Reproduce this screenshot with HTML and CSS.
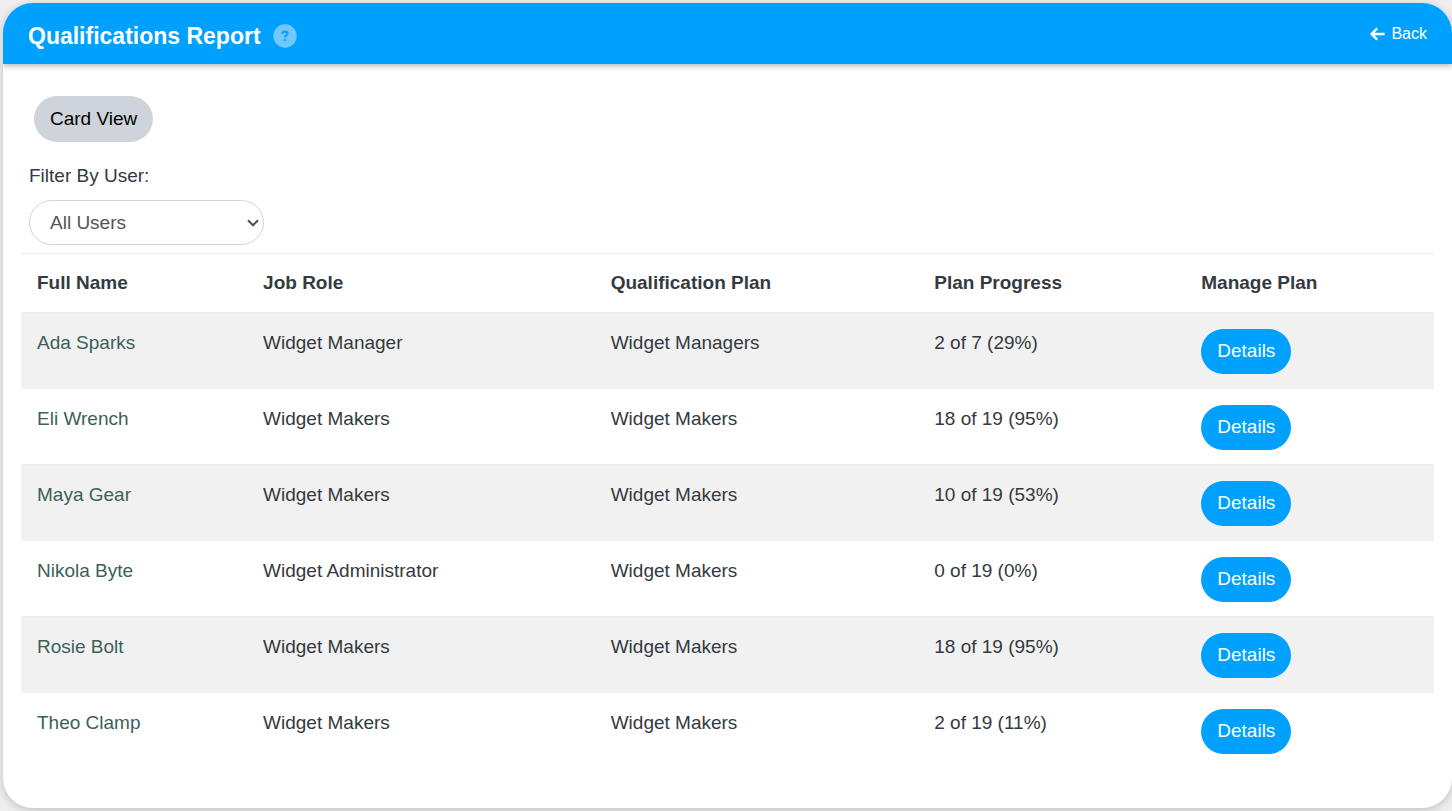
FILE: index.html
```
<!DOCTYPE html>
<html lang="en">
<head>
    <meta charset="UTF-8">
    <meta name="viewport" content="width=device-width, initial-scale=1">
    <title>Qualifications Report</title>
    <link rel="stylesheet" href="styles.css">
</head>
<body>
    <div class="card">
        <header class="card-header">
            <h1>Qualifications Report</h1>
            <button type="button" class="help-button" aria-label="Help">
                <svg width="24" height="24" viewBox="0 0 24 24" aria-hidden="true">
                    <circle cx="12" cy="12" r="11.7" fill="#70c8ff"/>
                    <path d="M9.2 9.8C9.4 8.4 10.5 7.7 11.9 7.7c1.6 0 2.6.8 2.6 2 0 1.9-2.6 1.8-2.6 3.9" fill="none" stroke="#159fff" stroke-width="2.3"/>
                    <rect x="10.7" y="14.9" width="2.4" height="2.2" fill="#159fff"/>
                </svg>
            </button>
            <a href="#" class="back-link">
                <svg width="15" height="14" viewBox="0 0 15 14" aria-hidden="true">
                    <path d="M7.2 1.4L1.6 7L7.2 12.6M2 7H14.6" fill="none" stroke="#ffffff" stroke-width="2.4"/>
                </svg>
                Back
            </a>
        </header>

        <main class="card-body">
            <button type="button" class="button view-button">Card View</button>

            <form class="filter">
                <label for="user-filter">Filter By User:</label>
                <div class="select-wrap">
                    <select id="user-filter" name="user">
                        <option value="">All Users</option>
                        <option>Ada Sparks</option>
                        <option>Eli Wrench</option>
                        <option>Maya Gear</option>
                        <option>Nikola Byte</option>
                        <option>Rosie Bolt</option>
                        <option>Theo Clamp</option>
                    </select>
                    <svg class="select-arrow" width="12" height="8" viewBox="0 0 12 8" aria-hidden="true">
                        <path d="M1 1.2L6 6.2L11 1.2" fill="none" stroke="#555555" stroke-width="2.1"/>
                    </svg>
                </div>
            </form>

            <table class="report">
                <thead>
                    <tr>
                        <th class="col-name">Full Name</th>
                        <th class="col-role">Job Role</th>
                        <th class="col-plan">Qualification Plan</th>
                        <th class="col-progress">Plan Progress</th>
                        <th>Manage Plan</th>
                    </tr>
                </thead>
                <tbody>
                    <tr>
                        <td><a href="#">Ada Sparks</a></td>
                        <td>Widget Manager</td>
                        <td>Widget Managers</td>
                        <td>2 of 7 (29%)</td>
                        <td><button type="button" class="button">Details</button></td>
                    </tr>
                    <tr>
                        <td><a href="#">Eli Wrench</a></td>
                        <td>Widget Makers</td>
                        <td>Widget Makers</td>
                        <td>18 of 19 (95%)</td>
                        <td><button type="button" class="button">Details</button></td>
                    </tr>
                    <tr>
                        <td><a href="#">Maya Gear</a></td>
                        <td>Widget Makers</td>
                        <td>Widget Makers</td>
                        <td>10 of 19 (53%)</td>
                        <td><button type="button" class="button">Details</button></td>
                    </tr>
                    <tr>
                        <td><a href="#">Nikola Byte</a></td>
                        <td>Widget Administrator</td>
                        <td>Widget Makers</td>
                        <td>0 of 19 (0%)</td>
                        <td><button type="button" class="button">Details</button></td>
                    </tr>
                    <tr>
                        <td><a href="#">Rosie Bolt</a></td>
                        <td>Widget Makers</td>
                        <td>Widget Makers</td>
                        <td>18 of 19 (95%)</td>
                        <td><button type="button" class="button">Details</button></td>
                    </tr>
                    <tr>
                        <td><a href="#">Theo Clamp</a></td>
                        <td>Widget Makers</td>
                        <td>Widget Makers</td>
                        <td>2 of 19 (11%)</td>
                        <td><button type="button" class="button">Details</button></td>
                    </tr>
                </tbody>
            </table>
        </main>
    </div>
</body>
</html>
```
FILE: styles.css
```
* {
    box-sizing: border-box;
}

body {
    margin: 0;
    padding: 3px 0 3px 3px;
    background-color: #eeeeee;
    color: #343a40;
    font-family: Arial, "Liberation Sans", sans-serif;
    font-size: 19px;
    line-height: 28px;
}

a {
    text-decoration: none;
}

button, select {
    font: inherit;
    cursor: pointer;
}

.card {
    background-color: #ffffff;
    border-radius: 30px;
    box-shadow: 0 2px 8px rgba(0, 0, 0, 0.2);
    overflow: hidden;
}

/* Header bar */
.card-header {
    display: flex;
    align-items: center;
    gap: 12px;
    padding: 18px 25px 13px;
    background-color: #00a0ff;
    color: #ffffff;
    box-shadow: 0 2px 6px rgba(0, 0, 0, 0.3);
}

.card-header h1 {
    margin: 0;
    font-size: 23px;
    line-height: 30px;
}

.help-button {
    display: flex;
    padding: 0;
    border: none;
    background: none;
}

.back-link {
    display: flex;
    align-items: center;
    gap: 6px;
    margin-left: auto;
    padding-bottom: 4px;
    color: #ffffff;
    font-size: 16px;
    line-height: 24px;
}

.card-body {
    padding: 32px 18px 40px;
}

/* Buttons */
.button {
    display: block;
    padding: 8px 16px 9px;
    border: none;
    border-radius: 23px;
    background-color: #00a0ff;
    color: #ffffff;
}

.view-button {
    margin-left: 13px;
    padding: 9px 16px;
    background-color: #ced4da;
    color: #000000;
}

/* User filter */
.filter {
    padding: 20px 8px 8px;
}

.filter label {
    display: block;
    margin-bottom: 10px;
}

.select-wrap {
    position: relative;
    width: 235px;
}

.filter select {
    display: block;
    width: 100%;
    height: 45px;
    padding: 0 20px;
    appearance: none;
    border: 1px solid #ced4da;
    border-radius: 23px;
    background-color: #ffffff;
    color: #555555;
}

.select-arrow {
    position: absolute;
    top: 19px;
    right: 5px;
    pointer-events: none;
}

/* Report table */
.report {
    width: 100%;
    table-layout: fixed;
    border-collapse: collapse;
}

.report th, .report td {
    padding: 15px 16px;
    border-top: 1px solid #eceeef;
    text-align: left;
    vertical-align: top;
}

.report td {
    padding-top: 16px;
    padding-bottom: 14px;
}

.report tbody tr:nth-child(odd) {
    background-color: #f1f1f1;
}

.report a {
    color: #3b6159;
}

.col-name {
    width: 16%;
}

.col-role {
    width: 24.6%;
}

.col-plan {
    width: 22.9%;
}

.col-progress {
    width: 18.9%;
}
```
